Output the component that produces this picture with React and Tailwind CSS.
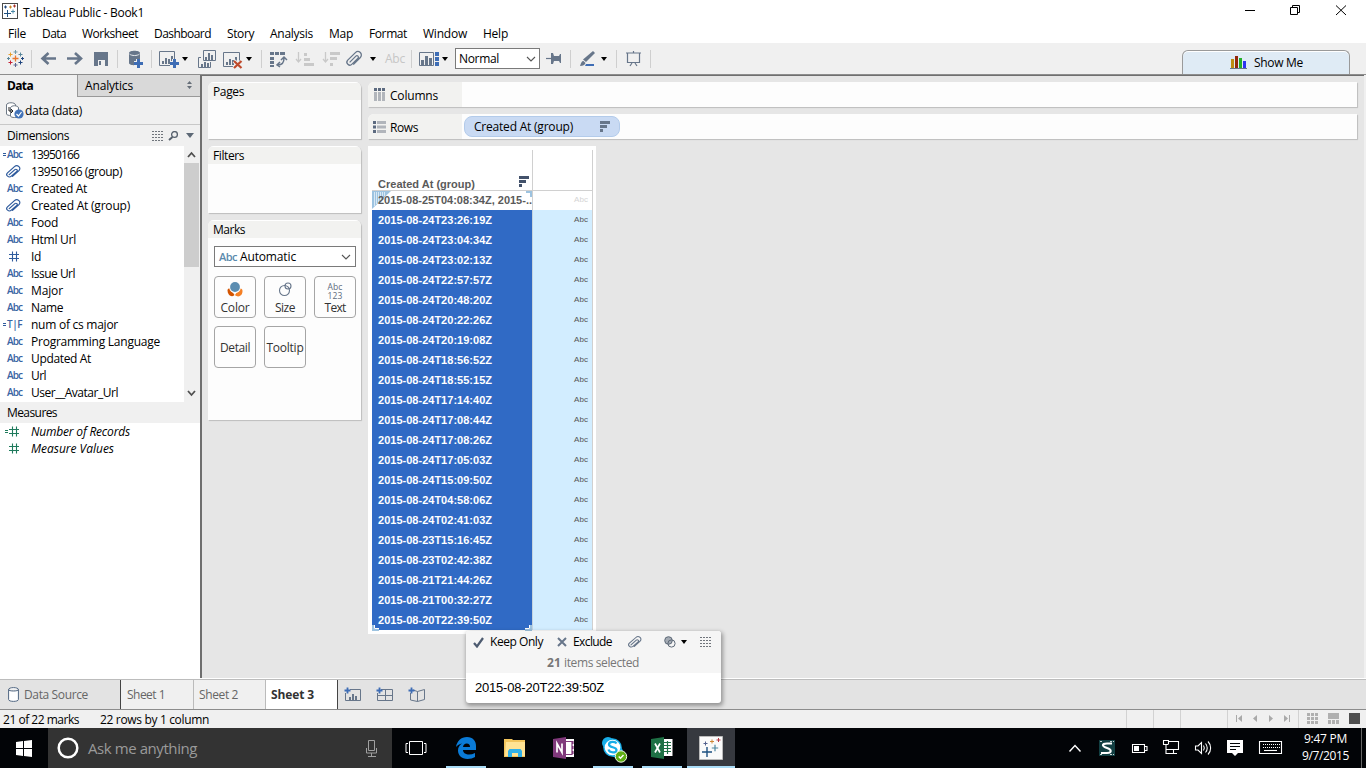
import React, { useLayoutEffect, useRef } from "react";

/* Text whose tracking is adjusted so that it fills a known width. */
function Fit({ w, className = "", children }) {
  const ref = useRef(null);
  useLayoutEffect(() => {
    const el = ref.current;
    el.style.letterSpacing = "0px";
    const natural = el.getBoundingClientRect().width;
    el.style.letterSpacing = (w - natural) / el.textContent.length + "px";
  }, [w]);
  return (
    <span ref={ref} className={"block w-fit shrink-0 whitespace-pre " + className}>
      {children}
    </span>
  );
}

function Art({ x, y, w, h, className = "", children }) {
  return (
    <svg width={w} height={h} viewBox={`${x} ${y} ${w} ${h}`} className={"block shrink-0 " + className}>
      {children}
    </svg>
  );
}

const Tool = ({ x, w, children }) => <Art x={x} y={43} w={w} h={31}>{children}</Art>;
const Task = ({ x, w, className, children }) => <Art x={x} y={728} w={w} h={40} className={className}>{children}</Art>;
const Sep = ({ x }) => <path d={`M${x + 0.5} 50V68`} stroke="#cfcfcf" />;
const Caret = ({ x, y = 57 }) => <path d={`M${x} ${y}h6l-3 4z`} fill="#000" />;

const Plus = ({ x, y, r = 2, c, s = 1 }) => (
  <path d={`M${x - r} ${y}H${x + r}M${x} ${y - r}V${y + r}`} stroke={c} strokeWidth={s} />
);

const CLIP = "M3.5 10.5L8.8 5.2a1.2 1.2 0 0 1 1.8 1.8L5.5 12a2.4 2.4 0 0 1-3.6-3.4L8.4 2.2a2.9 2.9 0 0 1 4.2 4.1L6.6 12.4";
const Clip = ({ c, size = 14, className = "" }) => (
  <svg width={size} height={size - 2} viewBox="0.5 0.5 14 13.5" preserveAspectRatio="none" className={"block shrink-0 " + className}>
    <path d={CLIP} fill="none" stroke={c} strokeWidth="1.1" strokeLinecap="round" />
  </svg>
);

function TypeIcon({ kind }) {
  const eq = kind.startsWith("=");
  const k = kind.replace("=", "");
  const green = k.endsWith("g");
  const color = green ? "#1f7a5c" : "#2f5b9d";
  if (k === "clip") return <div className="w-[31px] pl-[6px]"><Clip c={color} size={15} /></div>;
  if (k[0] === "#")
    return (
      <svg width="31" height="17" viewBox="0 0 31 17" className="block shrink-0" stroke={color} strokeWidth="1.1">
        <path d="M9 6.5H19M9 10.5H19M12.5 3.5V13.5M16.5 3.5V13.5" />
        {eq && <path d="M5 7.5h3M5 9.5h3" />}
      </svg>
    );
  return (
    <div className="flex w-[31px] shrink-0 items-center pl-[3px] text-[10px] font-semibold leading-[17px] text-[#3a64a3]">
      <svg width="3" height="4" viewBox="0 0 3 4" className="mt-px block shrink-0" stroke="#2f5b9d">{eq && <path d="M0 .5h3M0 2.500h3" />}</svg>
      <Fit w={15} className="ml-[1px]">{k}</Fit>
    </div>
  );
}

const dimensions = [
  ["=Abc", "13950166", 48],
  ["clip", "13950166 (group)", 91],
  ["Abc", "Created At", 56],
  ["clip", "Created At (group)", 99],
  ["Abc", "Food", 27],
  ["Abc", "Html Url", 45],
  ["#", "Id", 10],
  ["Abc", "Issue Url", 44],
  ["Abc", "Major", 32],
  ["Abc", "Name", 32],
  ["=T|F", "num of cs major", 87],
  ["Abc", "Programming Language", 129],
  ["Abc", "Updated At", 60],
  ["Abc", "Url", 15],
  ["Abc", "User__Avatar_Url", 87],
];

const stamps = [
  "2015-08-24T23:26:19Z", "2015-08-24T23:04:34Z", "2015-08-24T23:02:13Z", "2015-08-24T22:57:57Z",
  "2015-08-24T20:48:20Z", "2015-08-24T20:22:26Z", "2015-08-24T20:19:08Z", "2015-08-24T18:56:52Z",
  "2015-08-24T18:55:15Z", "2015-08-24T17:14:40Z", "2015-08-24T17:08:44Z", "2015-08-24T17:08:26Z",
  "2015-08-24T17:05:03Z", "2015-08-24T15:09:50Z", "2015-08-24T04:58:06Z", "2015-08-24T02:41:03Z",
  "2015-08-23T15:16:45Z", "2015-08-23T02:42:38Z", "2015-08-21T21:44:26Z", "2015-08-21T00:32:27Z",
  "2015-08-20T22:39:50Z",
];

const menus = [
  ["File", 18, "ml-[8px]"], ["Data", 24, "ml-[16px]"], ["Worksheet", 56, "ml-[16px]"],
  ["Dashboard", 57, "ml-[16px]"], ["Story", 27, "ml-[16px]"], ["Analysis", 43, "ml-[16px]"],
  ["Map", 24, "ml-[16px]"], ["Format", 38, "ml-[16px]"], ["Window", 44, "ml-[16px]"], ["Help", 25, "ml-[16px]"],
];

function TitleBar() {
  return (
    <div className="flex h-[23px] bg-white">
      <Art x={0} y={0} w={23} h={23}>
        <rect x="2.5" y="3.5" width="15" height="15" fill="#fff" stroke="#4a4a4a" />
        <Plus x={7.5} y={13.5} r={3.5} c="#20507f" />
        <Plus x={13} y={11.5} r={2} c="#4d8aa8" />
        <Plus x={5.5} y={7} r={1.5} c="#1f477d" />
        <Plus x={10.5} y={7} r={1.5} c="#c88424" />
        <Plus x={14.5} y={6} r={1.5} c="#a8322b" />
      </Art>
      <Fit w={121} className="mt-px text-[12px] leading-[23px]">Tableau Public - Book1</Fit>
      <Art x={1240} y={0} w={126} h={23} className="ml-auto">
        <g fill="none" stroke="#000">
          <path d="M1245 10.5h10" />
          <path d="M1290.500 7.500h7v7h-7zM1292.500 7V5.500h7v7H1298" />
          <path d="M1336 5.500l10 9.500M1346 5.500l-10 9.500" />
        </g>
      </Art>
    </div>
  );
}

function Bars({ x, y }) {
  return <path d={`M${x} ${y + 5}h2v3h-2zM${x + 3} ${y + 2}h2v6h-2zM${x + 6} ${y + 3}h2v5h-2zM${x + 9} ${y}h2v8h-2z`} fill="#67768a" />;
}

function Toolbar() {
  const g = "#67768a";
  return (
    <div className="flex h-[31px] items-stretch bg-[#f0f0f0]">
      <Tool x={0} w={36}>
        <Plus x={15.5} y={58.5} r={3} c="#e8762c" s={1.3} />
        <Plus x={15.500} y={52} r={2} c="#7199a6" /><Plus x={15.5} y={65} r={2} c="#5b6591" />
        <Plus x={10.5} y={54.5} r={2} c="#e8a02c" /><Plus x={20.5} y={54.5} r={2} c="#59879b" />
        <Plus x={10.5} y={62.5} r={2} c="#c72035" /><Plus x={20.5} y={62.500} r={2} c="#1f457e" />
        <Plus x={8.500} y={58.5} r={1.5} c="#5b879b" /><Plus x={22.5} y={58.5} r={1.5} c="#1f457e" />
        <Sep x={31} />
      </Tool>
      <Tool x={36} w={26}><path d="M56 58.500H43M48.500 53l-6 5.500 6 5.500" fill="none" stroke={g} strokeWidth="2.600" /></Tool>
      <Tool x={62} w={26}><path d="M67 58.500H80M75 53l6 5.500-6 5.500" fill="none" stroke={g} strokeWidth="2.600" /></Tool>
      <Tool x={88} w={34}>
        <path d="M94 52h14v14H94z" fill={g} /><path d="M98 60h7v6h-7z" fill="#f0f0f0" /><path d="M99 61h2v4h-2z" fill={g} />
        <Sep x={117} />
      </Tool>
      <Tool x={122} w={34}>
        <path d="M129 53c0-3 11-3 11 0v10c0 3-11 3-11 0z" fill={g} />
        <path d="M129.500 54c2 2 8 2 10 0" stroke="#e8ebee" fill="none" />
        <path d="M134 63.500h9M138.500 59v9" stroke="#f0f0f0" strokeWidth="5" /><path d="M134 63.500h9M138.500 59v9" stroke="#3e6db5" strokeWidth="3" />
        <Sep x={151} />
      </Tool>
      <Tool x={156} w={37}>
        <path d="M159.500 51.500h15v14h-15z" fill="none" stroke={g} /><Bars x={162} y={56} />
        <path d="M170 63.500h9M174.500 59v9" stroke="#f0f0f0" strokeWidth="5" /><path d="M170 63.500h9M174.500 59v9" stroke="#3e6db5" strokeWidth="3" />
        <Caret x={182} />
      </Tool>
      <Tool x={193} w={27}>
        <path d="M203.500 50.500h12v10h-12zM201 57.500h-2.500v10h12V62" fill="none" stroke={g} />
        <path d="M205 57h2v3h-2zM208 53h2v7h-2zM211 55h2v5h-2zM201 64h2v3h-2zM204 62h2v5h-2zM207 63h2v4h-2z" fill={g} />
      </Tool>
      <Tool x={220} w={45}>
        <path d="M223.500 52.500h16v14h-16z" fill="none" stroke={g} /><Bars x={226} y={57} />
        <path d="M234 61l8 7M242 61l-8 7" stroke="#f0f0f0" strokeWidth="4" /><path d="M234 61l7.500 7M241.500 61l-7.500 7" stroke="#bf4a2c" strokeWidth="2.200" />
        <Caret x={246} /><Sep x={261} />
      </Tool>
      <Tool x={265} w={27}>
        <path d="M270 52h4v3h-4zM275 52h4v3h-4zM280 52h5v3h-5zM270 57h4v3h-4zM270 61h4v3h-4zM270 65h4v2h-4z" fill={g} />
        <path d="M278 65c4 0 6-2 6-7M281 60l3-3 3 3M280 62l-3 3 3 2" stroke={g} strokeWidth="1.500" fill="none" />
      </Tool>
      <Tool x={292} w={27}>
        <path d="M298.500 52v9M296 59l2.500 3 2.500-3" stroke="#c9c9c9" fill="none" strokeWidth="1.300" /><path d="M304 53h3v3h-3zM304 58h6v3h-6zM304 63h10v3h-10z" fill="#c9c9c9" />
      </Tool>
      <Tool x={319} w={24}>
        <path d="M325.500 52v9M323 59l2.500 3 2.500-3" stroke="#c9c9c9" fill="none" strokeWidth="1.300" /><path d="M330 52h10v3h-10zM330 57h7v3h-7zM330 63h3v3h-3z" fill="#c9c9c9" />
      </Tool>
      <Tool x={343} w={42}>
        <path d={CLIP} transform="translate(345.500 50) scale(1.180)" fill="none" stroke={g} strokeWidth="1.100" />
        <Caret x={370} />
      </Tool>
      <Fit w={20} className="text-[12px] leading-[31px] text-[#c6c6c6]">Abc</Fit>
      <Tool x={405} w={50}>
        <Sep x={411} />
        <path d="M419.500 52.500h14v13h-14z" fill="none" stroke={g} />
        <path d="M421 60h3v5h-3zM425 56h3v9h-3zM429 58h3v7h-3z" fill={g} />
        <path d="M435 52h4v4h-4zM435 57h4v4h-4zM435 62h4v4h-4z" fill="#3e6db5" />
        <Caret x={442} />
      </Tool>
      <div className="mt-[5px] flex h-[21px] w-[85px] items-center justify-between border border-[#7a7a7a] bg-white pl-[3px] pr-[3px]">
        <Fit w={40} className="text-[12px] leading-[19px]">Normal</Fit>
        <svg width="10" height="8" viewBox="0 0 10 8"><path d="M1 2l4 4 4-4" fill="none" stroke="#555" strokeWidth="1.100" /></svg>
      </div>
      <Tool x={540} w={35}>
        <path d="M546 58.500h6" stroke={g} strokeWidth="1.200" /><path d="M551 53h2l1 3h5l1-2h1v9h-1l-1-2h-5l-1 3h-2z" fill={g} />
        <Sep x={570} />
      </Tool>
      <Tool x={575} w={46}>
        <path d="M593 51l2 2-9 9-3-2.500z" fill={g} /><path d="M580 66c1-3 1.500-5 3.500-5l2 2c-.5 2-2.500 3-5.500 3z" fill={g} /><path d="M586 64h8v2h-9z" fill="#3e6db5" />
        <Caret x={601} /><Sep x={616} />
      </Tool>
      <Tool x={621} w={34}>
        <path d="M626 53h15M627.500 53v9.500h12V53M633.500 51v2M630 66l2-3M637 66l-2-3" fill="none" stroke={g} strokeWidth="1.200" /><Sep x={650} />
      </Tool>
      <div className="ml-auto mr-[16px] mt-[7px] flex h-[24px] w-[168px] items-center rounded-t-[6px] border border-b-0 border-[#9a9a9a] bg-[#dfebf5] pl-[47px] shadow-[inset_0_1px_0_#fff]">
        <svg width="17" height="13" viewBox="0 0 17 13"><path d="M1 3h3v9H1z" fill="#bd8d12" /><path d="M5 0h3v12H5z" fill="#93280c" /><path d="M9 2h3v10H9z" fill="#22b02b" /><path d="M13 5h3v7h-3z" fill="#2b35f2" /><path d="M0 12.500h17" stroke="#67768a" /></svg>
        <Fit w={49} className="ml-[7px] text-[12px] leading-[22px]">Show Me</Fit>
      </div>
    </div>
  );
}

function ListGlyph({ c = "#70757c" }) {
  return (
    <svg width="12" height="10" viewBox="0 0 12 10" className="block shrink-0" shapeRendering="crispEdges"><path d="M0 .5h12M0 3.500h12M0 6.500h12M0 9.500h12" stroke={c} strokeDasharray="2 1" /></svg>
  );
}

function DataPane() {
  return (
    <div className="flex w-[202px] shrink-0 flex-col border-r-2 border-[#6f6f6f] bg-white">
      <div className="flex h-[22px] bg-[#f0f0f0]">
        <div className="flex w-[77px] items-center pl-[7px]"><Fit w={26} className="text-[12px] font-bold leading-[20px]">Data</Fit></div>
        <div className="flex flex-1 items-center border-b border-l border-[#999] bg-[#d9d9d9] pl-[7px] pr-[7px]">
          <Fit w={48} className="text-[12px] leading-[20px]">Analytics</Fit>
          <svg width="7" height="8" viewBox="0 0 7 8" className="-mt-[2px] ml-auto"><path d="M1 3h5L3.500 0zM1 5h5L3.500 8z" fill="#666e78" /></svg>
        </div>
      </div>
      <div className="flex h-[28px] items-center border-b border-[#c8c8c8] bg-[#f0f0f0] pl-[6px]">
        <Art x={6} y={101} w={19} h={18}>
          <g fill="#fff" stroke="#6d7885"><path d="M6.500 104c0-3 9-3 9 0v9c0 2-9 2-9 0z" /><path d="M10.500 107c0-3 8-3 8 0v8c0 2-8 2-8 0z" /><path d="M9 106v4h4M11 108l2 2-2 2" fill="none" stroke="#222" /></g>
          <circle cx="19" cy="113" r="4.600" fill="#4273b8" /><path d="M16.500 113l2 2 3-4" fill="none" stroke="#fff" strokeWidth="1.200" />
        </Art>
        <Fit w={57} className="text-[12px] leading-[20px]">data (data)</Fit>
      </div>
      <div className="flex h-[21px] items-center bg-[#f0f0f0] pl-[7px] pr-[6px]">
        <Fit w={62} className="text-[12px] leading-[20px]">Dimensions</Fit>
        <div className="ml-auto flex items-center">
          <ListGlyph />
          <svg width="11" height="10" viewBox="0 0 11 10" className="ml-[4px]"><circle cx="6.500" cy="3.500" r="2.900" fill="none" stroke="#56606c" strokeWidth="1.300" /><path d="M4.500 6L1 9" stroke="#56606c" strokeWidth="1.900" /></svg>
          <svg width="8" height="5" viewBox="0 0 8 5" className="ml-[7px]"><path d="M0 0h8L4 5z" fill="#5d6976" /></svg>
        </div>
      </div>
      <div className="flex h-[256px]">
        <div className="flex-1">
          {dimensions.map(([k, t, w]) => (
            <div key={t} className="flex h-[17px] items-center">
              <TypeIcon kind={k} />
              <Fit w={w} className="text-[12px] leading-[17px]">{t}</Fit>
            </div>
          ))}
        </div>
        <div className="flex w-[16px] flex-col items-start bg-[#f0f0f0]">
          <svg width="16" height="17" viewBox="0 0 16 17"><path d="M4 11l3.500-4L11 11" fill="none" stroke="#505050" strokeWidth="1.800" /></svg>
          <div className="h-[104px] w-[15px] bg-[#cdcdcd]" />
          <svg width="16" height="17" viewBox="0 0 16 17" className="mt-auto"><path d="M4 6l3.500 4L11 6" fill="none" stroke="#505050" strokeWidth="1.800" /></svg>
        </div>
      </div>
      <div className="flex h-[21px] items-center bg-[#f0f0f0] pl-[7px]"><Fit w={50} className="text-[12px] leading-[20px]">Measures</Fit></div>
      {[["=#g", "Number of Records", 99], ["#g", "Measure Values", 83]].map(([k, t, w]) => (
        <div key={t} className="flex h-[17px] items-center">
          <TypeIcon kind={k} />
          <Fit w={w} className="text-[12px] italic leading-[17px]">{t}</Fit>
        </div>
      ))}
    </div>
  );
}

function Card({ title, w, className, children }) {
  return (
    <div className={"w-[153px] overflow-hidden rounded-t-[6px] bg-[#fdfdfd] shadow-[1px_1px_1px_#bdbdbd] " + className}>
      <div className="flex h-[18px] items-center border-t border-white bg-[#f2f2f0] pl-[5px]"><Fit w={w} className="text-[12px] leading-[17px]">{title}</Fit></div>
      {children}
    </div>
  );
}

function MarkButton({ label, w, children }) {
  return (
    <div className="flex h-[42px] w-[42px] flex-col items-center justify-center rounded-[4px] border border-[#a5a5a5] bg-[#fdfdfd] pt-[2px] text-[#333]">
      {children}
      <Fit w={w} className="text-[12px] leading-[16px]">{label}</Fit>
    </div>
  );
}

function Marks() {
  return (
    <Card title="Marks" w={32} className="h-[200px]">
      <div className="ml-[6px] mt-[8px] flex h-[21px] w-[142px] items-center border border-[#7a7a7a] bg-white px-[4px]">
        <Fit w={18} className="text-[11px] font-semibold leading-[19px] text-[#5a8aad]">Abc</Fit>
        <Fit w={56} className="ml-[3px] text-[12px] leading-[19px]">Automatic</Fit>
        <svg width="10" height="8" viewBox="0 0 10 8" className="ml-auto"><path d="M1 2l4 4 4-4" fill="none" stroke="#555" strokeWidth="1.100" /></svg>
      </div>
      <div className="ml-[6px] mt-[9px] grid w-[142px] grid-cols-[42px_42px_42px] gap-[8px]">
        <MarkButton label="Color" w={29}>
          <svg width="16" height="15" viewBox="0 0 16 15" className="mb-[3px] mt-[1px]"><path d="M.5 8c0-1 2-2 3-1l4 6c-3 3-7 0-7-5z" fill="#d35400" /><path d="M8 13l4-6c2-1 3.500 0 3.500 2 0 5-4.500 7-7.500 4z" fill="#f58025" /><circle cx="8" cy="5.500" r="5.700" fill="#fdfdfd" /><circle cx="8" cy="5" r="4.900" fill="#5b8db1" /></svg>
        </MarkButton>
        <MarkButton label="Size" w={20}>
          <svg width="16" height="15" viewBox="0 0 16 15" className="mb-[3px] mt-[1px]" fill="none" stroke="#67768a" strokeWidth="1.100"><circle cx="7.500" cy="8.500" r="5" /><circle cx="11" cy="4" r="3" /></svg>
        </MarkButton>
        <MarkButton label="Text" w={21}>
          <div className="flex h-[19px] flex-col items-center gap-px pt-[2px] text-[8.500px] leading-[8px] text-[#5d6b7d]">
            <Fit w={15}>Abc</Fit><Fit w={15}>123</Fit>
          </div>
        </MarkButton>
        <MarkButton label="Detail" w={30} />
        <MarkButton label="Tooltip" w={37} />
      </div>
    </Card>
  );
}

function SortGlyph({ c }) {
  return <svg width="11" height="11" viewBox="0 0 11 11" className="block shrink-0"><path d="M0 0h10v3H0zM0 4h7v3H0zM0 8h3v3H0z" fill={c} /></svg>;
}

function Shelf({ name, w, icon, children }) {
  return (
    <div className="flex h-[25px] w-[989px] overflow-hidden rounded-tl-[6px] bg-[#fdfdfd] shadow-[1px_1px_1px_#bdbdbd]">
      <div className="flex w-[94px] items-center bg-[#f2f2f0] pl-[5px]">
        {icon}
        <Fit w={w} className="ml-[4px] mt-[3px] text-[12px] leading-[18px]">{name}</Fit>
      </div>
      {children}
    </div>
  );
}

function Sheet() {
  return (
    <div className="relative h-[488px] w-[228px] bg-white pl-[4px] pt-[4px] font-['Liberation_Sans',sans-serif]">
      <div className="flex h-[41px] w-[221px] border-b border-[#d0d0d0]">
        <div className="flex w-[161px] justify-between border-r border-[#d0d0d0] pl-[6px] pr-[2px]">
          <Fit w={97} className="mt-[27px] text-[11px] font-bold leading-[14px] text-[#5a5a5a]">Created At (group)</Fit>
          <div className="mt-[26px]"><SortGlyph c="#43526b" /></div>
        </div>
        <div className="flex-1 border-r border-[#d0d0d0]" />
      </div>
      <div className="flex h-[19px] w-[221px]">
        <div className="relative w-[161px] overflow-hidden border-r border-[#d0d0d0] pl-[6px]">
          <svg width="19" height="19" viewBox="0 0 19 19" className="absolute left-0 top-0"><path d="M0 0h19L0 18z" fill="#9dc3e0" /><path d="M2.500 1v14M4.500 1v12M6.500 1v10M8.500 1v8M10.500 1v6M12.500 1v4" stroke="#d8e8f4" /></svg>
          <svg width="6" height="6" viewBox="0 0 6 6" className="absolute right-0 top-0"><path d="M0 0h6v6H4V2H0z" fill="#9dc3e0" /></svg>
          <Fit w={154} className="relative text-[11px] font-bold leading-[19px] text-[#5a5a5a]">2015-08-25T04:08:34Z, 2015-..</Fit>
        </div>
        <div className="flex flex-1 justify-end border-r border-[#d0d0d0] pr-[4px]"><Fit w={14} className="text-[8px] leading-[18px] text-[#d4d4d4]">Abc</Fit></div>
      </div>
      {stamps.map((s) => (
        <div key={s} className="flex h-[20px] w-[221px]">
          <div className="w-[161px] border-r border-[#c5d3de] bg-[#306ac5] pl-[6px]"><Fit w={114} className="text-[11px] font-bold leading-[20px] text-white">{s}</Fit></div>
          <div className="flex flex-1 justify-end border-r border-[#d0d0d0] bg-[#d2edff] pr-[4px]"><Fit w={14} className="text-[8px] leading-[20px] text-[#555]">Abc</Fit></div>
        </div>
      ))}
      <svg width="160" height="7" viewBox="0 0 160 7" className="absolute bottom-[3px] left-[4px]"><path d="M0 1h2v4h5v2H0zM160 1h-2v4h-5v2h7z" fill="#9dc3e0" /><path d="M2.500 1v3.500H7M157.500 1v3.500H153" fill="none" stroke="#fff" /></svg>
    </div>
  );
}

function Popup() {
  return (
    <div className="absolute left-[466px] top-[631px] h-[72px] w-[255px] overflow-visible rounded-[3px] bg-white shadow-[1px_2px_4px_1px_rgba(0,0,0,0.35)]">
      <div className="h-[42px] rounded-t-[3px] bg-[#f5f5f5]">
        <div className="flex h-[22px] items-center pl-[7px]">
          <svg width="11" height="11" viewBox="0 0 11 11"><path d="M1 6l3 3.500L10 1" fill="none" stroke="#4d5b70" strokeWidth="2.200" /></svg>
          <Fit w={53} className="ml-[6px] text-[12px] leading-[20px]">Keep Only</Fit>
          <svg width="10" height="10" viewBox="0 0 10 10" className="ml-[14px]"><path d="M1 1l8 8M9 1L1 9" stroke="#67768a" strokeWidth="2" /></svg>
          <Fit w={39} className="ml-[6px] text-[12px] leading-[20px]">Exclude</Fit>
          <Clip c="#67768a" size={14} className="ml-[16px]" />
          <svg width="12" height="12" viewBox="0 0 12 12" className="ml-[22px]"><circle cx="4.500" cy="4.500" r="3.800" fill="#a4abb4" stroke="#5d6977" /><circle cx="7.500" cy="7.500" r="3.600" fill="none" stroke="#5d6977" /></svg>
          <svg width="6" height="4" viewBox="0 0 6 4" className="ml-[5px]"><path d="M0 0h6L3 4z" /></svg>
          <div className="ml-[13px]"><ListGlyph /></div>
        </div>
        <div className="flex h-[20px] pl-[81px] text-[12px] leading-[20px] text-[#777]"><Fit w={14} className="font-bold">21</Fit><Fit w={75} className="ml-[3px]">items selected</Fit></div>
      </div>
      <div className="pl-[9px] pt-[5px]"><Fit w={129} className="font-['Liberation_Sans',sans-serif] text-[13px] leading-[20px]">2015-08-20T22:39:50Z</Fit></div>
    </div>
  );
}

function SheetTabs() {
  return (
    <div className="flex h-[31px] shrink-0 border-b border-t border-b-[#8c8c8c] border-t-[#bcbcbc] bg-[#e3e3e3] text-[12px] text-[#666]">
      <div className="flex w-[121px] items-center border-r border-[#444] pl-[8px]">
        <svg width="11" height="15" viewBox="0 0 11 15"><path d="M.6 2.500c0-2.500 9.800-2.500 9.800 0v10c0 2.500-9.800 2.500-9.800 0zM.6 2.500c0 2 9.800 2 9.800 0" fill="#fff" stroke="#4f6580" /></svg>
        <Fit w={64} className="ml-[5px] mt-px">Data Source</Fit>
      </div>
      <div className="flex w-[73px] items-center border-r border-[#bbb] bg-[#f0f0f0] pl-[6px] pt-px"><Fit w={38}>Sheet 1</Fit></div>
      <div className="flex w-[72px] items-center border-r border-[#bbb] bg-[#f0f0f0] pl-[5px] pt-px"><Fit w={39}>Sheet 2</Fit></div>
      <div className="flex w-[72px] items-center border-r border-[#444] bg-white pl-[5px] pt-px"><Fit w={43} className="font-bold text-[#333]">Sheet 3</Fit></div>
      <Art x={338} y={680} w={100} h={29}>
        <g fill="none" stroke="#67768a">
          <path d="M350 689.500h10.500v11h-15V693" /><path d="M381 689.500h11.500v11h-15V693M385.500 690v10M378 695.500h14" />
          <path d="M413 690l4.500 1.500v10l-7-1.500V693M417.500 691.500l7-2v10l-7 2" />
        </g>
        <path d="M349 697h2v3h-2zM352 694h2v6h-2zM355 696h2v4h-2z" fill="#67768a" />
        <Plus x={347.500} y={690.500} r={3} c="#3e6db5" s={1.800} /><Plus x={379.500} y={690.500} r={3} c="#3e6db5" s={1.800} /><Plus x={411.500} y={690.500} r={3} c="#3e6db5" s={1.800} />
      </Art>
    </div>
  );
}

function StatusBar() {
  return (
    <div className="flex h-[18px] shrink-0 bg-[#f0f0f0] pl-[3px]">
      <Fit w={76} className="mt-px text-[12px] leading-[17px]">21 of 22 marks</Fit>
      <Fit w={109} className="ml-[21px] mt-px text-[12px] leading-[17px]">22 rows by 1 column</Fit>
      <Art x={1120} y={710} w={246} h={18} className="ml-auto">
        <path d="M1126.500 710v18M1153.500 710v18M1180.500 710v18M1227.500 710v18M1298.500 710v18" stroke="#d2d2d2" />
        <path d="M1236 715h1v7h-1zM1242 715v7l-4-3.500zM1257 715v7l-4-3.500zM1269 715v7l4-3.500zM1284 715v7l4-3.500zM1289 715h1v7h-1z" fill="#a9a9a9" />
        <path d="M1307 713h3v3h-3zM1311 713h3v3h-3zM1315 713h3v3h-3zM1307 717h3v3h-3zM1311 717h3v3h-3zM1315 717h3v3h-3zM1307 721h3v3h-3zM1311 721h3v3h-3zM1315 721h3v3h-3zM1328 713h11v6h-11zM1328 720h3v4h-3zM1332 720h3v4h-3zM1336 720h3v4h-3z" fill="#b0b0b0" />
        <path d="M1349 713h11v11h-11z" fill="#4f4f4f" />
      </Art>
    </div>
  );
}

function Taskbar() {
  return (
    <div className="flex h-[40px] shrink-0 bg-[#020407]">
      <Task x={0} w={48}><path d="M16 742l7-1v7h-7zM24 741l8-1v8h-8zM16 749h7v7l-7-1zM24 749h8v8l-8-1z" fill="#fff" /></Task>
      <div className="flex w-[344px] items-center bg-[#333]">
        <Task x={48} w={40}><circle cx="68" cy="748" r="9.300" fill="none" stroke="#fff" strokeWidth="2.500" /></Task>
        <Fit w={109} className="text-[15px] leading-[40px] text-[#9a9a9a]">Ask me anything</Fit>
        <Task x={360} w={32} className="ml-auto"><path d="M368.500 740.500h6v10h-6zM366.500 748v5h10v-5M371.500 753v3M368 756.500h8" fill="none" stroke="#a0a0a0" /></Task>
      </div>
      <Task x={392} w={48}><path d="M409.500 741.500h13v13h-13zM408 743.500h-2v9h2M424 743.500h2v9h-2" fill="none" stroke="#fff" /></Task>
      <Task x={440} w={52}>
        <path d="M456 747c1-6 5-10 11-10 6 0 9 4 9 9v4h-13c0 3 3 4.500 6 4.500 2 0 4-.5 6-1.500v4c-2 1.200-4.500 2-7.500 2-6 0-9.500-4-9.500-8.500 0-3 1.500-5.500 4-7-2.500.5-4.500 1.800-6 3.500zM463 747h7c0-2-1-3.500-3.300-3.500-2 0-3.400 1.500-3.700 3.500z" fill="#0a7bd7" />
        <path d="M446 766h40v2h-40z" fill="#a9dcf7" />
      </Task>
      <Task x={492} w={46}>
        <path d="M504 739h8l1 1h12v17h-21z" fill="#f2c55c" /><path d="M506 742h19v14h-20z" fill="#ffe394" /><path d="M508 757v-6l1.500-2h11l1.500 2v6h-4v-4h-6v4z" fill="#31b1e8" />
      </Task>
      <Task x={538} w={50}>
        <path d="M565 739h9v18h-9z" fill="#fff" /><path d="M566 741.500h6v13h-6M573 741v3M573 746v3M573 751v3" fill="none" stroke="#80397b" strokeWidth="1.200" /><path d="M553 739l13-2v22l-13-2z" fill="#80397b" /><path d="M557 752.500v-9l5 9v-9" fill="none" stroke="#fff" strokeWidth="1.700" />
      </Task>
      <Task x={588} w={50}>
        <circle cx="608" cy="743" r="6" fill="#18aee8" /><circle cx="617" cy="752" r="6" fill="#18aee8" /><circle cx="612.500" cy="747.500" r="9.300" fill="#18aee8" />
        <circle cx="612.500" cy="747.500" r="7.800" fill="#fff" />
        <path d="M616.500 743.500c-1-2-7.500-2.500-7.500 1 0 3.500 7.500 2 7.500 5.500 0 3.500-7 3-8-.5" fill="none" stroke="#18aee8" strokeWidth="2.300" />
        <circle cx="621" cy="756.500" r="5.700" fill="#5fae13" stroke="#eef7e4" /><path d="M618.700 756.500l1.800 1.800 3-3.300" fill="none" stroke="#fff" strokeWidth="1.400" /><path d="M593 766h40v2h-40z" fill="#a9dcf7" />
      </Task>
      <Task x={638} w={49}>
        <path d="M663 739h9.500v17H663z" fill="#fff" /><path d="M664 742.500h7M664 745.500h7M664 748.500h7M664 751.500h7M667.500 741v13" stroke="#1e7145" strokeWidth="1.200" /><path d="M651 739l13-2v22l-13-2z" fill="#1e7145" /><path d="M655 743.500l5 9M660 743.500l-5 9" stroke="#fff" strokeWidth="1.700" /><path d="M642 766h40v2h-40z" fill="#a9dcf7" />
      </Task>
      <Task x={687} w={48}>
        <path d="M687 728h48v40h-48z" fill="#36393f" /><path d="M699.500 736.500h23v23h-23z" fill="#fafafa" stroke="#bbb" />
        <Plus x={707} y={752} r={5} c="#1e5080" s={1.400} /><Plus x={715} y={748} r={3.200} c="#4c85a0" s={1.200} /><Plus x={705.500} y={743.500} r={2} c="#53618e" /><Plus x={712} y={741.500} r={2} c="#cf8636" /><Plus x={718.500} y={740} r={2} c="#b53740" />
        <path d="M687 766h48v2h-48z" fill="#a9dcf7" />
      </Task>
      <Task x={1060} w={230} className="ml-auto">
        <g fill="none" stroke="#fff" strokeWidth="1.100">
          <path d="M1069.500 751.500l5.500-6 5.500 6" strokeWidth="1.400" />
          <path d="M1132.500 744.500h12v8h-12zM1145 746.500h2v4h-2" />
          <path d="M1168 744.500h-4.500v-4h5v4M1166 744.500v9h3M1169 741.500h9.500v8h-12M1173.500 750v3M1168 753.500h9" />
          <path d="M1195.500 746v4h2.500l3.500 3.500v-11L1198 746zM1203.500 745.500c1 1.500 1 3.500 0 5M1205.500 743.500c2.300 2.500 2.300 6.500 0 9M1208 741.500c3.500 3.500 3.500 9.500 0 13" />
          <path d="M1259.500 741.500h22v12h-22zM1262 744.500h18M1262 747.500h18" /><path d="M1262 744.500h18M1262 747.500h18" stroke="#020407" strokeDasharray="1 1" /><path d="M1264 750.500h13" />
        </g>
        <path d="M1134 746h5v5h-5zM1227 740h16v13h-5l-3 3-3-3h-5z" fill="#fff" /><path d="M1230 743.500h10M1230 746.500h10M1230 749.500h6" stroke="#020407" />
        <path d="M1099 740h16v16h-16z" fill="#123f42" /><path d="M1112 743.500h-5c-6 0-5 3 0 4.500s5 5 0 5h-6" fill="none" stroke="#fff" strokeWidth="2" /><path d="M1110 741.500h4M1100 741.500h2M1110 754.500h4M1100 754.500h3" stroke="#c7d3d3" strokeDasharray="2 1" />
      </Task>
      <div className="flex w-[71px] flex-col items-center pt-[2px] text-[12px] leading-[17px] text-white"><Fit w={43}>9:47 PM</Fit><Fit w={47}>9/7/2015</Fit></div>
      <div className="w-[5px] border-l border-[#666]" />
    </div>
  );
}

export default function App() {
  return (
    <div className="relative flex h-[768px] w-[1366px] flex-col overflow-hidden bg-white font-['Open_Sans',sans-serif] text-black">
      <TitleBar />
      <div className="flex h-[20px] items-center bg-white pt-[2px]">
        {menus.map(([t, w, m]) => <Fit key={t} w={w} className={"text-[12px] leading-[18px] " + m}>{t}</Fit>)}
      </div>
      <Toolbar />
      <div className="flex h-[604px] shrink-0 border-t border-[#8d8d8d] bg-[#e6e6e6]">
        <DataPane />
        <div className="flex flex-1 items-start border-t border-t-[#6f6f6f] pl-[6px] pt-[6px]">
          <div className="flex w-[160px] flex-col gap-[7px]">
            <Card title="Pages" w={31} className="h-[57px]" />
            <Card title="Filters" w={31} className="h-[67px]" />
            <Marks />
          </div>
          <div className="flex flex-col gap-[7px]">
            <Shelf name="Columns" w={48} icon={<svg width="13" height="13" viewBox="0 0 13 13"><path d="M1 0h3v3H1zM5 0h3v3H5zM9 0h3v3H9z" fill="#5d6b80" /><path d="M1 4h3v9H1zM5 4h3v9H5zM9 4h3v9H9z" fill="#b1b5bb" /></svg>} />
            <Shelf name="Rows" w={28} icon={<svg width="13" height="12" viewBox="0 0 13 12"><path d="M0 0h3v3H0zM0 4.500h3v3H0zM0 9h3v3H0z" fill="#5d6b80" /><path d="M4 0h9v3H4zM4 4.500h9v3H4zM4 9h9v3H4z" fill="#b1b5bb" /></svg>}>
              <div className="ml-[2px] mt-[2px] flex h-[21px] w-[156px] items-center justify-between rounded-[8px] border border-[#b3cbea] bg-[#c9daf3] pl-[9px] pr-[8px]">
                <Fit w={99} className="text-[12px] leading-[19px]">Created At (group)</Fit>
                <SortGlyph c="#67768a" />
              </div>
            </Shelf>
            <Sheet />
          </div>
        </div>
        <div className="w-[2px] bg-[#f0f0f0]" />
      </div>
      <div className="h-px shrink-0 bg-white" />
      <SheetTabs />
      <StatusBar />
      <Taskbar />
      <Popup />
    </div>
  );
}
